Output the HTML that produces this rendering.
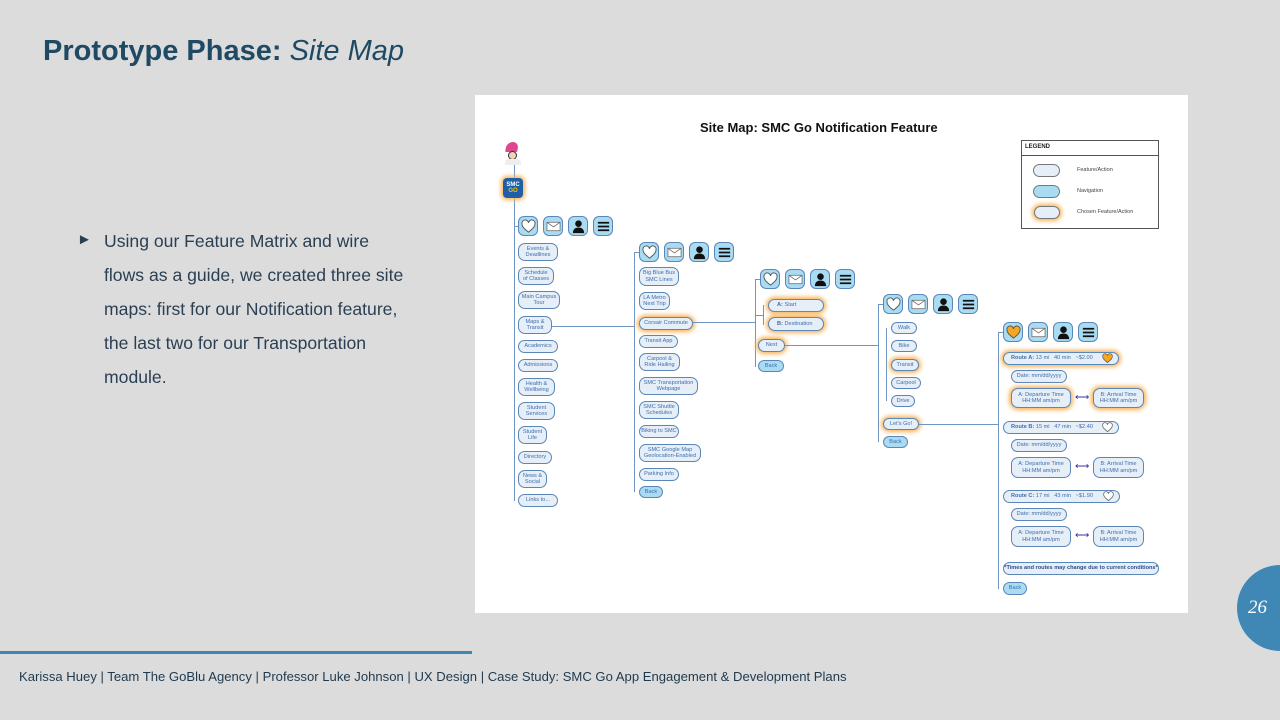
<!DOCTYPE html>
<html><head><meta charset="utf-8"><style>
*{margin:0;padding:0;box-sizing:border-box}
body{width:1280px;height:720px;background:#dcdcdc;position:relative;overflow:hidden;font-family:"Liberation Sans",sans-serif}
.a{position:absolute}
.n{position:absolute;border:1.3px solid #5b86b8;background:#e6eef7;border-radius:7px;color:#3f6fae;font-size:5.6px;line-height:6.4px;display:flex;align-items:center;justify-content:center;text-align:center;white-space:nowrap}
.nav{background:#a9dcf3}
.o{box-shadow:0 0 4px 2px #f7b45a}
.v{position:absolute;background:#6f95c4;width:1.2px}
.h{position:absolute;background:#6f95c4;height:1.2px}
.ic{position:absolute;width:20px;height:20px;border:1.3px solid #5b86b8;background:#a9dcf3;border-radius:6px;display:flex;align-items:center;justify-content:center}
.ic svg{width:15px;height:15px}
b{font-weight:bold}
</style></head><body>
<div class="a" style="left:43px;top:35px;font-size:29px;font-weight:bold;color:#1f4a63">Prototype Phase: <i style="font-weight:normal">Site Map</i></div>
<div class="a" style="left:77px;top:231px;font-size:15px;color:#2a3f52">►</div>
<div class="a" style="left:104px;top:224px;font-size:17.6px;line-height:34px;color:#2a3f52">Using our Feature Matrix and wire<br>flows as a guide, we created three site<br>maps: first for our Notification feature,<br>the last two for our Transportation<br>module.</div>
<div class="a" style="left:0;top:651px;width:472px;height:3px;background:#3f88b5"></div>
<div class="a" style="left:19px;top:669px;font-size:13.1px;color:#1f3a4f;white-space:nowrap">Karissa Huey | Team The GoBlu Agency | Professor Luke Johnson | UX Design | Case Study: SMC Go App Engagement &amp; Development Plans</div>
<div class="a" style="left:1237px;top:565px;width:86px;height:86px;border-radius:50%;background:#3f88b5"></div>
<div class="a" style="left:1248px;top:597px;font-size:19px;font-style:italic;color:#fff;font-family:'Liberation Serif',serif">26</div>

<div class="a" style="left:475px;top:95px;width:713px;height:518px;background:#fff"></div>
<div class="a" style="left:700px;top:120px;font-size:13px;font-weight:bold;color:#111">Site Map: SMC Go Notification Feature</div>
<!-- legend -->
<div class="a" style="left:1021px;top:140px;width:138px;height:89px;border:1px solid #555"></div>
<div class="a" style="left:1021px;top:155px;width:138px;height:1px;background:#555"></div>
<div class="a" style="left:1025px;top:144px;font-size:6px;font-weight:bold;color:#222">LEGEND</div>
<div class="n" style="left:1033px;top:164px;width:27px;height:13px;border-color:#777"></div>
<div class="n nav" style="left:1033px;top:185px;width:27px;height:13px;border-color:#777"></div>
<div class="n o" style="left:1034px;top:206px;width:26px;height:13px;border-color:#777"></div>
<div class="a" style="left:1077px;top:167px;font-size:5.5px;color:#444">Feature/Action</div>
<div class="a" style="left:1077px;top:188px;font-size:5.5px;color:#444">Navigation</div>
<div class="a" style="left:1077px;top:209px;font-size:5.5px;color:#444">Chosen Feature/Action</div>

<!-- avatar & logo -->
<div class="a" style="left:506px;top:142px;width:12px;height:10px;background:#e0468f;border-radius:6px 6px 1px 1px;transform:skewX(-10deg)"></div>
<div class="a" style="left:508px;top:151px;width:9px;height:9px;background:#f4d2b8;border-radius:50%;border:1px solid #333"></div>
<div class="a" style="left:505px;top:159px;width:16px;height:6px;background:#eee;border-radius:4px 4px 0 0"></div>
<div class="v" style="left:514px;top:165px;height:336px"></div>
<div class="a" style="left:503px;top:178px;width:20px;height:20px;background:#1f5fa8;border-radius:4px;box-shadow:0 0 4px 2px #f7b45a;color:#fff;font-size:6px;font-weight:bold;line-height:6px;text-align:center;padding-top:4px">SMC<br><span style="color:#f5c400">GO</span></div>

<svg width="0" height="0" style="position:absolute"><defs>
<symbol id="hr" viewBox="0 0 16 16"><path d="M8 14C3 10 1 8 1 5a3.5 3.5 0 0 1 7-1 3.5 3.5 0 0 1 7 1c0 3-2 5-7 9z" fill="#fff" stroke="#555" stroke-width="1"/></symbol>
<symbol id="ho" viewBox="0 0 16 16"><path d="M8 14C3 10 1 8 1 5a3.5 3.5 0 0 1 7-1 3.5 3.5 0 0 1 7 1c0 3-2 5-7 9z" fill="#f5a623" stroke="#555" stroke-width="1"/></symbol>
<symbol id="ml" viewBox="0 0 16 16"><rect x="1" y="3.5" width="14" height="9" fill="#fff" stroke="#666" stroke-width="0.8"/><path d="M1 3.5l7 5 7-5" fill="none" stroke="#666" stroke-width="0.8"/></symbol>
<symbol id="us" viewBox="0 0 16 16"><circle cx="8" cy="5" r="3.5" fill="#111"/><path d="M2 15c0-4 2.5-6 6-6s6 2 6 6z" fill="#111"/></symbol>
<symbol id="mn" viewBox="0 0 16 16"><path d="M2 4h12M2 8h12M2 12h12" stroke="#111" stroke-width="1.8"/></symbol>
</defs></svg>

<!-- col1 -->
<div class="h" style="left:514px;top:226px;width:4px"></div>
<div class="ic" style="left:518px;top:216px"><svg><use href="#hr"/></svg></div>
<div class="ic" style="left:543px;top:216px"><svg><use href="#ml"/></svg></div>
<div class="ic" style="left:568px;top:216px"><svg><use href="#us"/></svg></div>
<div class="ic" style="left:593px;top:216px"><svg><use href="#mn"/></svg></div>
<div class="n" style="left:518px;top:243px;width:40px;height:18px">Events &amp;<br>Deadlines</div>
<div class="n" style="left:518px;top:267px;width:36px;height:18px">Schedule<br>of Classes</div>
<div class="n" style="left:518px;top:291px;width:42px;height:18px">Main Campus<br>Tour</div>
<div class="n" style="left:518px;top:316px;width:34px;height:18px">Maps &amp;<br>Transit</div>
<div class="n" style="left:518px;top:340px;width:40px;height:13px">Academics</div>
<div class="n" style="left:518px;top:359px;width:40px;height:13px">Admissions</div>
<div class="n" style="left:518px;top:378px;width:37px;height:18px">Health &amp;<br>Wellbeing</div>
<div class="n" style="left:518px;top:402px;width:37px;height:18px">Student<br>Services</div>
<div class="n" style="left:518px;top:426px;width:29px;height:18px">Student<br>Life</div>
<div class="n" style="left:518px;top:451px;width:34px;height:13px">Directory</div>
<div class="n" style="left:518px;top:470px;width:29px;height:18px">News &amp;<br>Social</div>
<div class="n" style="left:518px;top:494px;width:40px;height:13px">Links to...</div>
<div class="h" style="left:552px;top:326px;width:82px"></div>

<!-- col2 -->
<div class="v" style="left:634px;top:252px;height:240px"></div>
<div class="h" style="left:634px;top:252px;width:5px"></div>
<div class="ic" style="left:639px;top:242px"><svg><use href="#hr"/></svg></div>
<div class="ic" style="left:664px;top:242px"><svg><use href="#ml"/></svg></div>
<div class="ic" style="left:689px;top:242px"><svg><use href="#us"/></svg></div>
<div class="ic" style="left:714px;top:242px"><svg><use href="#mn"/></svg></div>
<div class="n" style="left:639px;top:267px;width:40px;height:19px">Big Blue Bus<br>SMC Lines</div>
<div class="n" style="left:639px;top:292px;width:31px;height:18px">LA Metro<br>Next Trip</div>
<div class="n o" style="left:639px;top:317px;width:54px;height:13px">Corsair Commute</div>
<div class="n" style="left:639px;top:335px;width:39px;height:13px">Transit App</div>
<div class="n" style="left:639px;top:353px;width:41px;height:18px">Carpool &amp;<br>Ride Hailing</div>
<div class="n" style="left:639px;top:377px;width:59px;height:18px">SMC Transportation<br>Webpage</div>
<div class="n" style="left:639px;top:401px;width:40px;height:18px">SMC Shuttle<br>Schedules</div>
<div class="n" style="left:639px;top:425px;width:40px;height:13px">Biking to SMC</div>
<div class="n" style="left:639px;top:444px;width:62px;height:18px">SMC Google Map<br>Geolocation-Enabled</div>
<div class="n" style="left:639px;top:468px;width:40px;height:13px">Parking Info</div>
<div class="n nav" style="left:639px;top:486px;width:24px;height:12px">Back</div>
<div class="h" style="left:693px;top:322px;width:62px"></div>

<!-- col3 -->
<div class="v" style="left:755px;top:279px;height:88px"></div>
<div class="h" style="left:755px;top:279px;width:5px"></div>
<div class="ic" style="left:760px;top:269px"><svg><use href="#hr"/></svg></div>
<div class="ic" style="left:785px;top:269px"><svg><use href="#ml"/></svg></div>
<div class="ic" style="left:810px;top:269px"><svg><use href="#us"/></svg></div>
<div class="ic" style="left:835px;top:269px"><svg><use href="#mn"/></svg></div>
<div class="v" style="left:763px;top:305px;height:20px"></div>
<div class="h" style="left:755px;top:315px;width:8px"></div>
<div class="n o" style="left:768px;top:299px;width:56px;height:13px;justify-content:flex-start;padding-left:8px"><b>A:</b>&nbsp;Start</div>
<div class="n o" style="left:768px;top:317px;width:56px;height:14px;justify-content:flex-start;padding-left:8px"><b>B:</b>&nbsp;Destination</div>
<div class="n o" style="left:758px;top:339px;width:27px;height:13px">Next</div>
<div class="n nav" style="left:758px;top:360px;width:26px;height:12px">Back</div>
<div class="h" style="left:785px;top:345px;width:93px"></div>

<!-- col4 -->
<div class="v" style="left:878px;top:304px;height:138px"></div>
<div class="h" style="left:878px;top:304px;width:5px"></div>
<div class="ic" style="left:883px;top:294px"><svg><use href="#hr"/></svg></div>
<div class="ic" style="left:908px;top:294px"><svg><use href="#ml"/></svg></div>
<div class="ic" style="left:933px;top:294px"><svg><use href="#us"/></svg></div>
<div class="ic" style="left:958px;top:294px"><svg><use href="#mn"/></svg></div>
<div class="v" style="left:886px;top:328px;height:73px"></div>
<div class="n" style="left:891px;top:322px;width:26px;height:12px">Walk</div>
<div class="n" style="left:891px;top:340px;width:26px;height:12px">Bike</div>
<div class="n o" style="left:891px;top:359px;width:28px;height:12px">Transit</div>
<div class="n" style="left:891px;top:377px;width:30px;height:12px">Carpool</div>
<div class="n" style="left:891px;top:395px;width:24px;height:12px">Drive</div>
<div class="n o" style="left:883px;top:418px;width:36px;height:12px">Let's Go!</div>
<div class="n nav" style="left:883px;top:436px;width:25px;height:12px">Back</div>
<div class="h" style="left:919px;top:424px;width:79px"></div>

<!-- col5 -->
<div class="v" style="left:998px;top:332px;height:257px"></div>
<div class="h" style="left:998px;top:332px;width:5px"></div>
<div class="ic" style="left:1003px;top:322px"><svg><use href="#ho"/></svg></div>
<div class="ic" style="left:1028px;top:322px"><svg><use href="#ml"/></svg></div>
<div class="ic" style="left:1053px;top:322px"><svg><use href="#us"/></svg></div>
<div class="ic" style="left:1078px;top:322px"><svg><use href="#mn"/></svg></div>

<div class="n o" style="left:1003px;top:352px;width:116px;height:13px;justify-content:flex-start;padding-left:7px"><b>Route A:</b>&nbsp;13 mi &nbsp;&nbsp;40 min &nbsp;&nbsp;~$2.00</div>
<svg class="a" style="left:1102px;top:353px" width="11" height="11"><use href="#ho"/></svg>
<div class="n" style="left:1011px;top:370px;width:56px;height:13px">Date: mm/dd/yyyy</div>
<div class="n o" style="left:1011px;top:388px;width:60px;height:20px">A: Departure Time<br>HH:MM am/pm</div>
<div class="a" style="left:1075px;top:392px;font-size:10px;color:#3a2fa0">⟷</div>
<div class="n o" style="left:1093px;top:388px;width:51px;height:20px">B: Arrival Time<br>HH:MM am/pm</div>

<div class="n" style="left:1003px;top:421px;width:116px;height:13px;justify-content:flex-start;padding-left:7px"><b>Route B:</b>&nbsp;15 mi &nbsp;&nbsp;47 min &nbsp;&nbsp;~$2.40</div>
<svg class="a" style="left:1102px;top:422px" width="11" height="11"><use href="#hr"/></svg>
<div class="n" style="left:1011px;top:439px;width:56px;height:13px">Date: mm/dd/yyyy</div>
<div class="n" style="left:1011px;top:457px;width:60px;height:21px">A: Departure Time<br>HH:MM am/pm</div>
<div class="a" style="left:1075px;top:461px;font-size:10px;color:#3a2fa0">⟷</div>
<div class="n" style="left:1093px;top:457px;width:51px;height:21px">B: Arrival Time<br>HH:MM am/pm</div>

<div class="n" style="left:1003px;top:490px;width:117px;height:13px;justify-content:flex-start;padding-left:7px"><b>Route C:</b>&nbsp;17 mi &nbsp;&nbsp;43 min &nbsp;&nbsp;~$1.90</div>
<svg class="a" style="left:1103px;top:491px" width="11" height="11"><use href="#hr"/></svg>
<div class="n" style="left:1011px;top:508px;width:56px;height:13px">Date: mm/dd/yyyy</div>
<div class="n" style="left:1011px;top:526px;width:60px;height:21px">A: Departure Time<br>HH:MM am/pm</div>
<div class="a" style="left:1075px;top:530px;font-size:10px;color:#3a2fa0">⟷</div>
<div class="n" style="left:1093px;top:526px;width:51px;height:21px">B: Arrival Time<br>HH:MM am/pm</div>

<div class="n" style="left:1003px;top:562px;width:156px;height:13px;font-weight:bold;color:#2d4f8a">*Times and routes may change due to current conditions*</div>
<div class="n nav" style="left:1003px;top:582px;width:24px;height:13px">Back</div>
</body></html>
